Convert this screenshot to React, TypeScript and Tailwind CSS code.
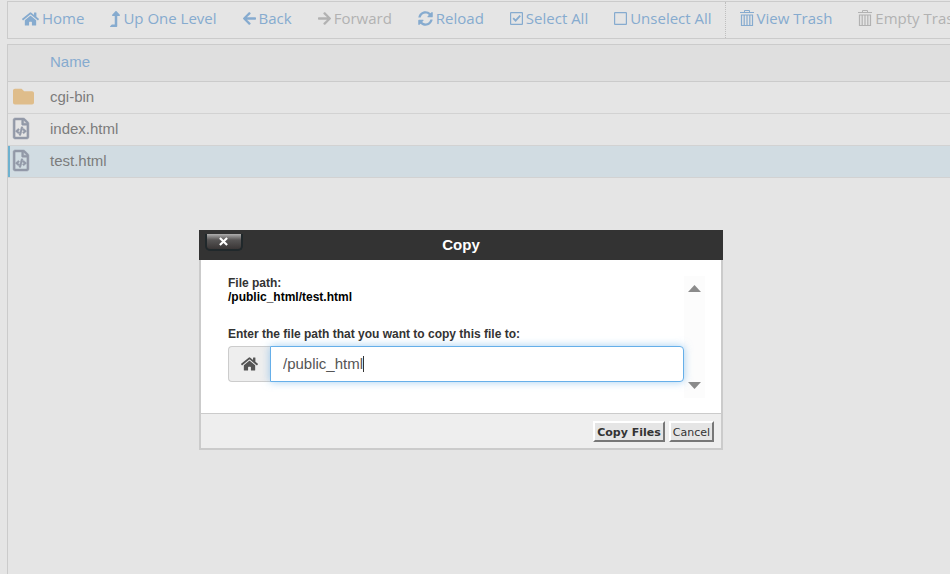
import { useEffect, useRef, useState } from "react";
import type { ReactNode } from "react";
import { FaArrowLeft, FaArrowRight, FaFolder, FaHome, FaLevelUpAlt, FaRegFileCode, FaSyncAlt } from "react-icons/fa";

const CheckBoxIcon = ({ checked = false }: { checked?: boolean }) => (
  <svg viewBox="0 0 13 13" className="h-[13px] w-[13px] shrink-0" fill="none" stroke="currentColor">
    <rect x="0.6" y="0.6" width="11.8" height="11.8" rx="0.5" strokeWidth="1.2" />
    {checked && <path d="M3.2 6.2 5.6 8.6l4.6-4.9" strokeWidth="1.8" />}
  </svg>
);

const TrashIcon = () => (
  <svg viewBox="0 0 14 18" className="h-[18px] w-[14px] shrink-0" fill="none" stroke="currentColor">
    <path d="M4.5 2.5v-2h5v2" strokeWidth="1" />
    <path d="M0 2.5h14" strokeWidth="1" />
    <path d="M1.5 5h11v10.5h-11z" strokeWidth="1.2" />
    <path d="M4.2 5v10.5M7 5v10.5M9.8 5v10.5" strokeWidth="1.2" />
  </svg>
);

type Tool = {
  label: string;
  icon: ReactNode;
  disabled?: boolean;
  divider?: boolean;
};

const tools: Tool[] = [
  { label: "Home", icon: <FaHome className="h-[16px] w-[17px]" /> },
  { label: "Up One Level", icon: <FaLevelUpAlt className="h-[16px] w-[10px]" /> },
  { label: "Back", icon: <FaArrowLeft className="h-[15px] w-[13px]" /> },
  { label: "Forward", icon: <FaArrowRight className="h-[15px] w-[13px]" />, disabled: true },
  { label: "Reload", icon: <FaSyncAlt className="h-[15px] w-[15px]" /> },
  { label: "Select All", icon: <CheckBoxIcon checked /> },
  { label: "Unselect All", icon: <CheckBoxIcon />, divider: true },
  { label: "View Trash", icon: <TrashIcon /> },
  { label: "Empty Trash", icon: <TrashIcon />, disabled: true },
];

const files = [
  { name: "cgi-bin", folder: true },
  { name: "index.html" },
  { name: "test.html", selected: true },
];

const Toolbar = () => (
  <nav className="flex h-[38px] overflow-hidden border border-r-0 border-[#cbcbcb] pl-px">
    {tools.map((tool) => (
      <button
        key={tool.label}
        type="button"
        disabled={tool.disabled}
        className={`flex shrink-0 items-center gap-[3px] px-[13px] pb-[3px] font-['Open_Sans',sans-serif] text-[15px] whitespace-nowrap ${
          tool.disabled ? "text-[#b2b2b2]" : "text-[#86abcf]"
        } ${tool.divider ? "mr-px border-r border-dotted border-[#bfbfbf]" : ""}`}
      >
        {tool.icon}
        <span>{tool.label}</span>
      </button>
    ))}
  </nav>
);

const FileTable = () => (
  <div className="mt-[5px] grow border-t border-l border-[#cbcbcb]">
    <table className="w-full border-collapse text-left text-[15px] text-[#7c7c7c]">
      <thead>
        <tr className="h-[36px] border-b border-[#cbcbcb] bg-[#dfdfdf] text-[#86abcf]">
          <th className="w-[42px]" aria-label="Type" />
          <th className="pb-[2px] font-normal">Name</th>
        </tr>
      </thead>
      <tbody>
        {files.map((file) => (
          <tr key={file.name} className={`h-8 border-b border-[#d2d2d2] ${file.selected ? "bg-[#d1dce2]" : ""}`}>
            <td className={`pb-[2px] pl-[5px] ${file.selected ? "shadow-[inset_2px_0_0_#6eb1cf]" : ""}`}>
              {file.folder ? (
                <FaFolder className="h-[21px] w-[21px] text-[#dfbd8b]" />
              ) : (
                <FaRegFileCode strokeWidth={12} className="h-[21px] w-[16px] overflow-visible text-[#9299a8]" />
              )}
            </td>
            <td>{file.name}</td>
          </tr>
        ))}
      </tbody>
    </table>
  </div>
);

const CopyDialog = () => {
  const [path, setPath] = useState("/public_html");
  const [touched, setTouched] = useState(false);
  const inputRef = useRef<HTMLInputElement>(null);

  useEffect(() => {
    const input = inputRef.current;
    if (!input) return;
    input.focus();
    input.setSelectionRange(input.value.length, input.value.length);
  }, []);

  return (
    <div role="dialog" aria-labelledby="copy-title" className="absolute top-[230px] left-[199px] w-[524px] bg-white">
      <div className="relative flex h-[30px] items-center justify-center bg-[#333]">
        <button
          type="button"
          aria-label="Close"
          className="absolute top-1 left-[6px] flex h-[17px] w-[38px] items-center justify-center rounded-b-[5px] border-2 border-t-0 border-[#20282b] bg-linear-to-b from-[#b0b0b0] via-[#575555] via-40% to-[#3a3636] pr-[2px]"
        >
          <svg viewBox="0 0 10 10" className="h-[9px] w-[9px]" fill="none" stroke="#fff" strokeWidth="2.4">
            <path d="M1 1l8 8M9 1L1 9" />
          </svg>
        </button>
        <h2 id="copy-title" className="text-[15px] font-bold text-white">Copy</h2>
      </div>
      <div className="border-2 border-t-0 border-[#cbcbcb]">
        <div className="flex px-4 pt-4 pb-[15px]">
          <div className="grow pb-4 pl-[11px] text-[12px] leading-[14px] font-bold text-[#333]">
            <p>File path:</p>
            <p className="text-black">/public_html/test.html</p>
            <label htmlFor="copy-path" className="mt-[23px] block">
              Enter the file path that you want to copy this file to:
            </label>
            <div className="relative mt-[5px] flex h-9">
              <span className="flex w-[42px] items-center justify-center rounded-l border border-r-0 border-[#ccc] bg-[#eee] text-[#555]">
                <FaHome className="h-4 w-[17px]" />
              </span>
              <input
                id="copy-path"
                ref={inputRef}
                type="text"
                value={path}
                onChange={(e) => {
                  setPath(e.target.value);
                  setTouched(true);
                }}
                className={`min-w-0 grow rounded-r border border-[#66afe9] bg-white px-3 pb-[2px] text-[15px] font-normal text-[#555] shadow-[0_0_8px_rgba(102,175,233,0.6)] outline-none ${
                  touched ? "" : "caret-transparent"
                }`}
              />
              {!touched && <span className="absolute top-[10px] left-[135px] h-4 w-px bg-[#333]" />}
            </div>
          </div>
          <div className="flex w-[21px] flex-col items-center justify-between bg-[#fcfcfc] py-[9px] text-[#8b8b8b]">
            <svg viewBox="0 0 13 7" className="h-[7px] w-[13px]" fill="currentColor"><path d="M6.5 0 13 7H0z" /></svg>
            <svg viewBox="0 0 13 7" className="h-[7px] w-[13px]" fill="currentColor"><path d="M6.5 7 13 0H0z" /></svg>
          </div>
        </div>
        <div className="flex h-[35px] items-center justify-end gap-1 border-t border-[#cbcbcb] bg-[#eee] px-[7px] pt-px font-['DejaVu_Sans',Verdana,sans-serif] text-[11px] text-[#333]">
          <button type="button" className="h-[21px] border-2 border-t-white border-r-[#777] border-b-[#777] border-l-white bg-[#e5e5e5] px-[2px] pt-[2px] font-bold">
            Copy Files
          </button>
          <button type="button" className="h-[21px] border-2 border-t-white border-r-[#777] border-b-[#777] border-l-white bg-[#e5e5e5] px-[2px] pt-[2px]">
            Cancel
          </button>
        </div>
      </div>
    </div>
  );
};

export default function App() {
  return (
    <div className="relative flex min-h-screen flex-col bg-[#e5e5e5] pt-px pl-[7px] font-['Liberation_Sans',Arial,sans-serif]">
      <Toolbar />
      <FileTable />
      <CopyDialog />
    </div>
  );
}
